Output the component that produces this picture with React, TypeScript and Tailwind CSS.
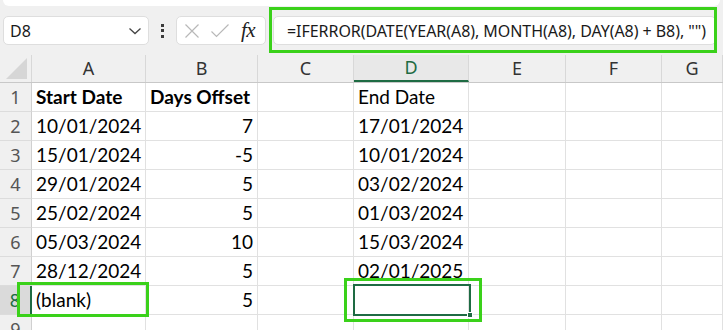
import React from 'react';

const cols = [
    { key: 'A', w: 'w-[114px]' },
    { key: 'B', w: 'w-[112px]' },
    { key: 'C', w: 'w-[96px]' },
    { key: 'D', w: 'w-[115px]' },
    { key: 'E', w: 'w-[97px]' },
    { key: 'F', w: 'w-[96px]' },
    { key: 'G', w: 'flex-1' },
];

type Cell = { text: string; bold?: boolean; right?: boolean };

const rows: Cell[][] = [
    [{ text: 'Start Date', bold: true }, { text: 'Days Offset', bold: true }, { text: '' }, { text: 'End Date' }],
    [{ text: '10/01/2024' }, { text: '7', right: true }, { text: '' }, { text: '17/01/2024' }],
    [{ text: '15/01/2024' }, { text: '-5', right: true }, { text: '' }, { text: '10/01/2024' }],
    [{ text: '29/01/2024' }, { text: '5', right: true }, { text: '' }, { text: '03/02/2024' }],
    [{ text: '25/02/2024' }, { text: '5', right: true }, { text: '' }, { text: '01/03/2024' }],
    [{ text: '05/03/2024' }, { text: '10', right: true }, { text: '' }, { text: '15/03/2024' }],
    [{ text: '28/12/2024' }, { text: '5', right: true }, { text: '' }, { text: '02/01/2025' }],
    [{ text: '(blank)' }, { text: '5', right: true }, { text: '' }, { text: '' }],
    [],
];

const uiFont = "font-['Noto_Sans',sans-serif]";
const cellFont = "font-['Lato',sans-serif]";

export default function App() {
    return (
        <div className="relative w-[723px] h-[330px] overflow-hidden bg-white">
            {/* toolbar */}
            <div className="h-[55px] bg-[#f0f0f0] pt-0">
                <div className="h-[6px] mx-[3px] bg-white rounded-b-[6px]" />
                <div className="mt-[10px] h-[29px] flex items-center pl-[3px] pr-[7px]">
                    <div className="w-[146px] h-[29px] bg-white border border-[#dedede] rounded-[5px] flex items-center justify-between pl-[6px] pr-[5px]">
                        <span className={`${uiFont} text-[16px] text-[#1a1a1a]`}>D8</span>
                        <svg width="14" height="8" viewBox="0 0 14 8" className="mr-[1px]">
                            <path d="M1.5 1.5 L7 6.5 L12.5 1.5" fill="none" stroke="#444" strokeWidth="1.3" />
                        </svg>
                    </div>
                    <div className="w-[27px] flex flex-col items-center gap-[2.5px]">
                        <span className="w-[3px] h-[3px] bg-[#3a3a3a]" />
                        <span className="w-[3px] h-[3px] bg-[#3a3a3a]" />
                        <span className="w-[3px] h-[3px] bg-[#3a3a3a]" />
                    </div>
                    <div className="w-[90px] h-[29px] bg-white border border-[#dedede] rounded-[5px] flex items-center pl-[7px]">
                        <svg width="16" height="16" viewBox="0 0 16 16">
                            <path d="M1.5 1.5 L14.5 14.5 M14.5 1.5 L1.5 14.5" stroke="#b8b8b8" strokeWidth="1.2" />
                        </svg>
                        <svg width="20" height="16" viewBox="0 0 20 16" className="ml-[10px]">
                            <path d="M1.5 8.5 L6.5 13.5 L18.5 1.5" fill="none" stroke="#b8b8b8" strokeWidth="1.2" />
                        </svg>
                        <span className="ml-[11px] font-['Liberation_Serif',serif] italic text-[21px] leading-none text-[#222] tracking-[-0.5px]">fx</span>
                    </div>
                    <div className="ml-[7px] flex-1 h-[29px] bg-white border border-[#dedede] rounded-[5px] flex items-center pl-[13px]">
                        <span className={`${uiFont} text-[16px] tracking-[-0.05px] text-[#1a1a1a] whitespace-nowrap`}>
                            =IFERROR(DATE(YEAR(A8), MONTH(A8), DAY(A8) + B8), "")
                        </span>
                    </div>
                </div>
            </div>

            {/* column headers */}
            <div className="flex h-[28px] bg-[#f0f0f0] border-b border-[#c8c8c8]">
                <div className="w-[32px] relative border-r border-[#d8d8d8]">
                    <div className="absolute right-[4px] bottom-[3px] w-0 h-0 border-l-[21px] border-l-transparent border-b-[21px] border-b-[#d6d6d6]" />
                </div>
                {cols.map((c) => (
                    <div
                        key={c.key}
                        className={`${c.w} shrink-0 flex items-center justify-center border-r border-[#d8d8d8] ${uiFont} text-[18px] ${
                            c.key === 'D' ? 'text-[#1e6b43] bg-[#e8e8e8] border-b-2 border-b-[#1e6b43]' : 'text-[#333]'
                        }`}
                    >
                        {c.key}
                    </div>
                ))}
            </div>

            {/* rows */}
            {rows.map((r, i) => {
                const selected = i === 7;
                return (
                    <div key={i} className="flex h-[29px]">
                        <div
                            className={`w-[32px] shrink-0 flex items-center justify-center border-b border-[#dcdcdc] ${uiFont} text-[18px] ${
                                selected
                                    ? 'bg-[#dadada] text-[#1e6b43] border-r-2 border-r-[#1e6b43]'
                                    : 'bg-[#f0f0f0] text-[#555] border-r border-r-[#d0d0d0]'
                            }`}
                        >
                            {i + 1}
                        </div>
                        {cols.map((c, j) => {
                            const cell = r[j];
                            return (
                                <div
                                    key={c.key}
                                    className={`${c.w} shrink-0 flex items-center pt-[1px] px-[4px] border-r border-b border-[#e1e1e1] ${cellFont} text-[19px] text-black whitespace-nowrap ${
                                        cell?.right ? 'justify-end' : 'justify-start'
                                    } ${cell?.bold ? 'font-bold' : ''}`}
                                >
                                    {cell?.text}
                                </div>
                            );
                        })}
                    </div>
                );
            })}

            {/* selected cell D8 */}
            <div className="absolute left-[353px] top-[284px] w-[118px] h-[32px] border-2 border-[#1e6b43]" />
            <div className="absolute left-[467px] top-[312px] w-[6px] h-[6px] bg-[#1e6b43] border border-white" />

            {/* highlight boxes */}
            <div className="absolute left-[269px] top-[7px] w-[448px] h-[46px] border-[3px] border-[#3ad11a]" />
            <div className="absolute left-[17px] top-[282px] w-[132px] h-[35px] border-[3px] border-[#3ad11a]" />
            <div className="absolute left-[344px] top-[278px] w-[138px] h-[44px] border-[3px] border-[#3ad11a]" />
        </div>
    );
}
